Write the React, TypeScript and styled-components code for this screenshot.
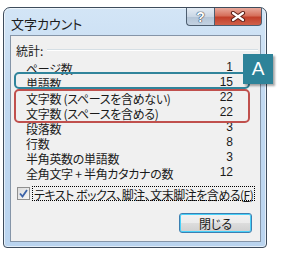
import styled, { createGlobalStyle } from 'styled-components';

const GlobalStyle = createGlobalStyle`
  body {
    margin: 0;
    background: #ffffff;
    font-family: "Noto Sans CJK JP", "Noto Sans", sans-serif;
    font-feature-settings: "palt";
  }
`;

type Stat = { label: string; value: number };

const stats: Stat[] = [
  { label: 'ページ数', value: 1 },
  { label: '単語数', value: 15 },
  { label: '文字数 (スペースを含めない)', value: 22 },
  { label: '文字数 (スペースを含める)', value: 22 },
  { label: '段落数', value: 3 },
  { label: '行数', value: 8 },
  { label: '半角英数の単語数', value: 3 },
  { label: '全角文字 + 半角カタカナの数', value: 12 },
];

const StatRow = ({ stat }: { stat: Stat }) => (
  <Row>
    <Label>{stat.label}</Label>
    <Value>{stat.value}</Value>
  </Row>
);

const App = () => {
  return (
    <Stage>
      <GlobalStyle />
      <Window>
        <TitleBar>
          <Title>文字カウント</Title>
          <Caption>
            <HelpButton>?</HelpButton>
            <CloseButton>
              <svg width="16" height="11" viewBox="0 0 16 11">
                <path d="M3 2 L13 9 M13 2 L3 9" stroke="#5a1f18" strokeWidth="4.2" strokeLinecap="round" />
                <path d="M3 2 L13 9 M13 2 L3 9" stroke="#ffffff" strokeWidth="2.2" strokeLinecap="round" />
              </svg>
            </CloseButton>
          </Caption>
        </TitleBar>
        <Client>
          <SectionHeader>
            <HeaderText>統計:</HeaderText>
            <Etched />
          </SectionHeader>
          <Rows>
            <StatRow stat={stats[0]} />
            <Highlight $color="#31849b" $inset="-2px 10px 0 3px">
              <StatRow stat={stats[1]} />
            </Highlight>
            <Highlight $color="#c0504d" $inset="0 10px -4px 3px">
              <StatRow stat={stats[2]} />
              <StatRow stat={stats[3]} />
            </Highlight>
            {stats.slice(4).map((s) => (
              <StatRow key={s.label} stat={s} />
            ))}
          </Rows>
          <CheckRow>
            <CheckBox>
              <svg width="9" height="9" viewBox="0 0 9 9">
                <path d="M1 4.5 L3.5 7.5 L8 1" stroke="#3b62a8" strokeWidth="1.8" fill="none" />
              </svg>
            </CheckBox>
            <CheckLabel>
              テキスト ボックス、脚注、文末脚注を含める(<u>F</u>)
            </CheckLabel>
          </CheckRow>
          <ButtonRow>
            <PushButton>閉じる</PushButton>
          </ButtonRow>
        </Client>
        <Badge>A</Badge>
      </Window>
    </Stage>
  );
};

const Stage = styled.div`
  padding: 7px 0 0 3px;
`;

const Window = styled.div`
  position: relative;
  width: 264px;
  height: 241px;
  box-sizing: border-box;
  display: flex;
  flex-direction: column;
  padding: 0 5px 5px 6px;
  border: 1px solid #3e4c5c;
  border-radius: 7px 7px 4px 4px;
  background: linear-gradient(180deg, #d3e5f6 0%, #c1d9f1 40%, #bad4ef 100%);
  box-shadow: inset 0 0 0 1px rgba(255, 255, 255, 0.6);
`;

const TitleBar = styled.div`
  height: 27px;
  display: flex;
  align-items: flex-start;
  flex-shrink: 0;
`;

const Title = styled.div`
  padding: 2px 0 0 1px;
  line-height: 27px;
  font-size: 13px;
  color: #1c1c1c;
`;

const Caption = styled.div`
  margin-left: auto;
  margin-right: -1px;
  display: flex;
  height: 18px;
`;

const CaptionButton = styled.div`
  height: 18px;
  box-sizing: border-box;
  border: 1px solid #4d5e70;
  border-top: none;
  display: flex;
  align-items: center;
  justify-content: center;
`;

const HelpButton = styled(CaptionButton)`
  width: 28px;
  border-right: none;
  border-radius: 0 0 0 4px;
  background: linear-gradient(180deg, #e4ecf4 0%, #cad7e5 50%, #b3c4d6 51%, #c3d2e2 100%);
  color: #ffffff;
  font-family: "Liberation Sans", Arial, sans-serif;
  font-weight: bold;
  font-size: 14px;
  text-shadow: 0 0 1px #2c3c4e, 0 0 1px #2c3c4e, 0 0 1px #2c3c4e;
`;

const CloseButton = styled(CaptionButton)`
  width: 48px;
  border-radius: 0 0 4px 0;
  background: linear-gradient(180deg, #e9a99c 0%, #d6705c 45%, #c2402b 55%, #d0604a 100%);
`;

const Client = styled.div`
  flex: 1;
  display: flex;
  flex-direction: column;
  border: 1px solid #8595a8;
  background: #f0f0f0;
  font-size: 12px;
  color: #1a1a1a;
`;

const SectionHeader = styled.div`
  display: flex;
  align-items: center;
  gap: 4px;
  height: 14px;
  margin: 7px 2px 0 5px;
`;

const HeaderText = styled.span`
  padding-top: 2px;
  line-height: 14px;
`;

const Etched = styled.div`
  flex: 1;
  height: 0;
  border-top: 1px solid #d5dfe5;
  border-bottom: 1px solid #ffffff;
`;

const Rows = styled.div`
  margin-top: 2px;
  display: flex;
  flex-direction: column;
`;

const Row = styled.div`
  height: 13px;
  padding: 2px 27px 0 15px;
  line-height: 15px;
  display: flex;
  justify-content: space-between;
  white-space: nowrap;
`;

const Label = styled.span`
  letter-spacing: -0.3px;
`;

const Value = styled.span`
  font-family: "Liberation Sans", Arial, sans-serif;
  margin-top: -1px;
`;

const Highlight = styled.div<{ $color: string; $inset: string }>`
  position: relative;
  &::after {
    content: '';
    position: absolute;
    inset: ${(p) => p.$inset};
    border: 2px solid ${(p) => p.$color};
    border-radius: 5px;
    pointer-events: none;
  }
`;

const CheckRow = styled.div`
  margin: 7px 0 0 6px;
  height: 14px;
  display: flex;
  align-items: center;
  gap: 3px;
`;

const CheckBox = styled.div`
  width: 13px;
  height: 13px;
  box-sizing: border-box;
  border: 1px solid #8f8f8f;
  background: linear-gradient(135deg, #dcdcdc 0%, #f6f6f6 100%);
  display: flex;
  align-items: center;
  justify-content: center;
`;

const CheckLabel = styled.span`
  outline: 1px dotted #000000;
  height: 13px;
  line-height: 16px;
  padding: 0 1px;
  letter-spacing: -0.5px;
  white-space: nowrap;
`;

const ButtonRow = styled.div`
  margin: 13px 8px 0 0;
  display: flex;
  justify-content: flex-end;
`;

const PushButton = styled.button`
  width: 73px;
  height: 20px;
  box-sizing: border-box;
  padding: 2px 0 0;
  border: 1px solid #3c7fb1;
  border-radius: 3px;
  box-shadow: inset 0 0 0 1px #48d1f9;
  background: linear-gradient(180deg, #f2f2f2 0%, #ebebeb 50%, #dddddd 51%, #cfcfcf 100%);
  font-family: "Noto Sans CJK JP", "Noto Sans", sans-serif;
  font-feature-settings: "palt";
  font-size: 12px;
  color: #1a1a1a;
  line-height: 16px;
`;

const Badge = styled.div`
  position: absolute;
  left: 239px;
  top: 46px;
  width: 30px;
  height: 30px;
  background: #2e8399;
  color: #ffffff;
  font-family: "Liberation Sans", Arial, sans-serif;
  font-size: 19px;
  display: flex;
  align-items: center;
  justify-content: center;
  box-shadow: 2px 2px 2px rgba(0, 0, 0, 0.35);
`;

export default App;
